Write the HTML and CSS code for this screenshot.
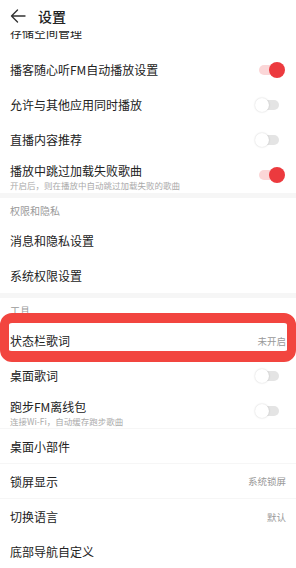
FILE: index.html
```html
<!DOCTYPE html>
<html lang="zh-CN">
<head>
    <meta charset="UTF-8">
    <meta name="viewport" content="width=device-width, initial-scale=1.0">
    <title>设置</title>
    <link rel="stylesheet" href="styles.css">
</head>
<body>
    <div class="page">
        <header class="topbar">
            <svg class="back" width="16" height="14" viewBox="0 0 16 14">
                <path d="M15 7H1.5M7.5 1L1.5 7l6 6" fill="none" stroke="#333" stroke-width="1.4" stroke-linecap="round" stroke-linejoin="round"/>
            </svg>
            <h1>设置</h1>
        </header>

        <div class="list">
            <div class="row cut"><span class="label">存储空间管理</span></div>
            <div class="row">
                <span class="label">播客随心听FM自动播放设置</span>
                <span class="switch on"></span>
            </div>
            <div class="row">
                <span class="label">允许与其他应用同时播放</span>
                <span class="switch"></span>
            </div>
            <div class="row">
                <span class="label">直播内容推荐</span>
                <span class="switch"></span>
            </div>
            <div class="row double">
                <div class="text">
                    <span class="label">播放中跳过加载失败歌曲</span>
                    <span class="sub">开启后，则在播放中自动跳过加载失败的歌曲</span>
                </div>
                <span class="switch on"></span>
            </div>

            <div class="gap"></div>
            <div class="group-title">权限和隐私</div>
            <div class="row"><span class="label">消息和隐私设置</span></div>
            <div class="row"><span class="label">系统权限设置</span></div>

            <div class="gap"></div>
            <div class="group-title">工具</div>
            <div class="row">
                <span class="label">状态栏歌词</span>
                <span class="value">未开启</span>
            </div>
            <div class="row">
                <span class="label">桌面歌词</span>
                <span class="switch"></span>
            </div>
            <div class="row double line">
                <div class="text">
                    <span class="label">跑步FM离线包</span>
                    <span class="sub">连接Wi-Fi，自动缓存跑步歌曲</span>
                </div>
                <span class="switch"></span>
            </div>
            <div class="row line"><span class="label">桌面小部件</span></div>
            <div class="row line">
                <span class="label">锁屏显示</span>
                <span class="value">系统锁屏</span>
            </div>
            <div class="row">
                <span class="label">切换语言</span>
                <span class="value">默认</span>
            </div>
            <div class="row"><span class="label">底部导航自定义</span></div>
        </div>

        <!-- red marker drawn over the screenshot -->
        <div class="highlight"></div>
    </div>
</body>
</html>
```

FILE: styles.css
```css
body {
    margin: 0;
    padding: 0;
    background: #fff;
    font-family: "Noto Sans CJK SC", "Noto Sans", sans-serif;
    color: #222;
}
.page {
    position: relative;
    width: 296px;
    height: 568px;
    overflow: hidden;
    background: #fff;
}
.topbar {
    position: relative;
    z-index: 2;
    height: 31px;
    display: flex;
    align-items: center;
    gap: 12px;
    padding-left: 10px;
    background: #fff;
}
.topbar h1 {
    margin: 0;
    font-size: 14px;
    font-weight: 500;
    color: #222;
    line-height: 1;
}
.list {
    display: flex;
    flex-direction: column;
}
.row {
    height: 35px;
    flex-shrink: 0;
    display: flex;
    align-items: center;
    justify-content: space-between;
    padding: 0 10px;
    box-sizing: border-box;
}
.row.cut {
    margin-top: -14px;
    align-items: flex-start;
    padding-top: 8px;
}
.row.line {
    border-bottom: 1px solid #f6f6f6;
}
.label {
    font-size: 12px;
    line-height: 15px;
    color: #222;
}
.row.double {
    height: 36px;
    align-items: flex-start;
    padding-top: 5px;
}
.row.double .label {
    line-height: 17px;
}
.row.double .switch {
    margin-top: 8px;
}
.text {
    display: flex;
    flex-direction: column;
}
.sub {
    font-size: 8.5px;
    line-height: 12px;
    color: #aaa;
}
.value {
    font-size: 9.5px;
    color: #999;
}
.gap {
    height: 5px;
    flex-shrink: 0;
    background: #f6f6f6;
}
.group-title {
    height: 25px;
    flex-shrink: 0;
    display: flex;
    align-items: center;
    padding-left: 10px;
    font-size: 10px;
    color: #999;
}
.switch {
    position: relative;
    width: 22px;
    height: 10px;
    margin-right: 7px;
    border-radius: 5px;
    background: #e4e4e4;
}
.switch::after {
    content: "";
    position: absolute;
    top: -2px;
    left: -2px;
    width: 14px;
    height: 14px;
    border-radius: 50%;
    background: #fff;
    box-shadow: 0 0 2px rgba(0, 0, 0, 0.2);
}
.switch.on {
    width: 22px;
    margin-right: 5px;
    background: #fbd6d7;
}
.switch.on::after {
    left: auto;
    right: -4px;
    top: -3px;
    width: 16px;
    height: 16px;
    background: #ec3a3e;
    box-shadow: none;
}
.highlight {
    position: absolute;
    z-index: 3;
    top: 313px;
    left: 0;
    width: 296px;
    height: 49px;
    box-sizing: border-box;
    border: 9px solid #f2453f;
    border-top-width: 10px;
    border-bottom-width: 11px;
    border-radius: 12px;
}
```
